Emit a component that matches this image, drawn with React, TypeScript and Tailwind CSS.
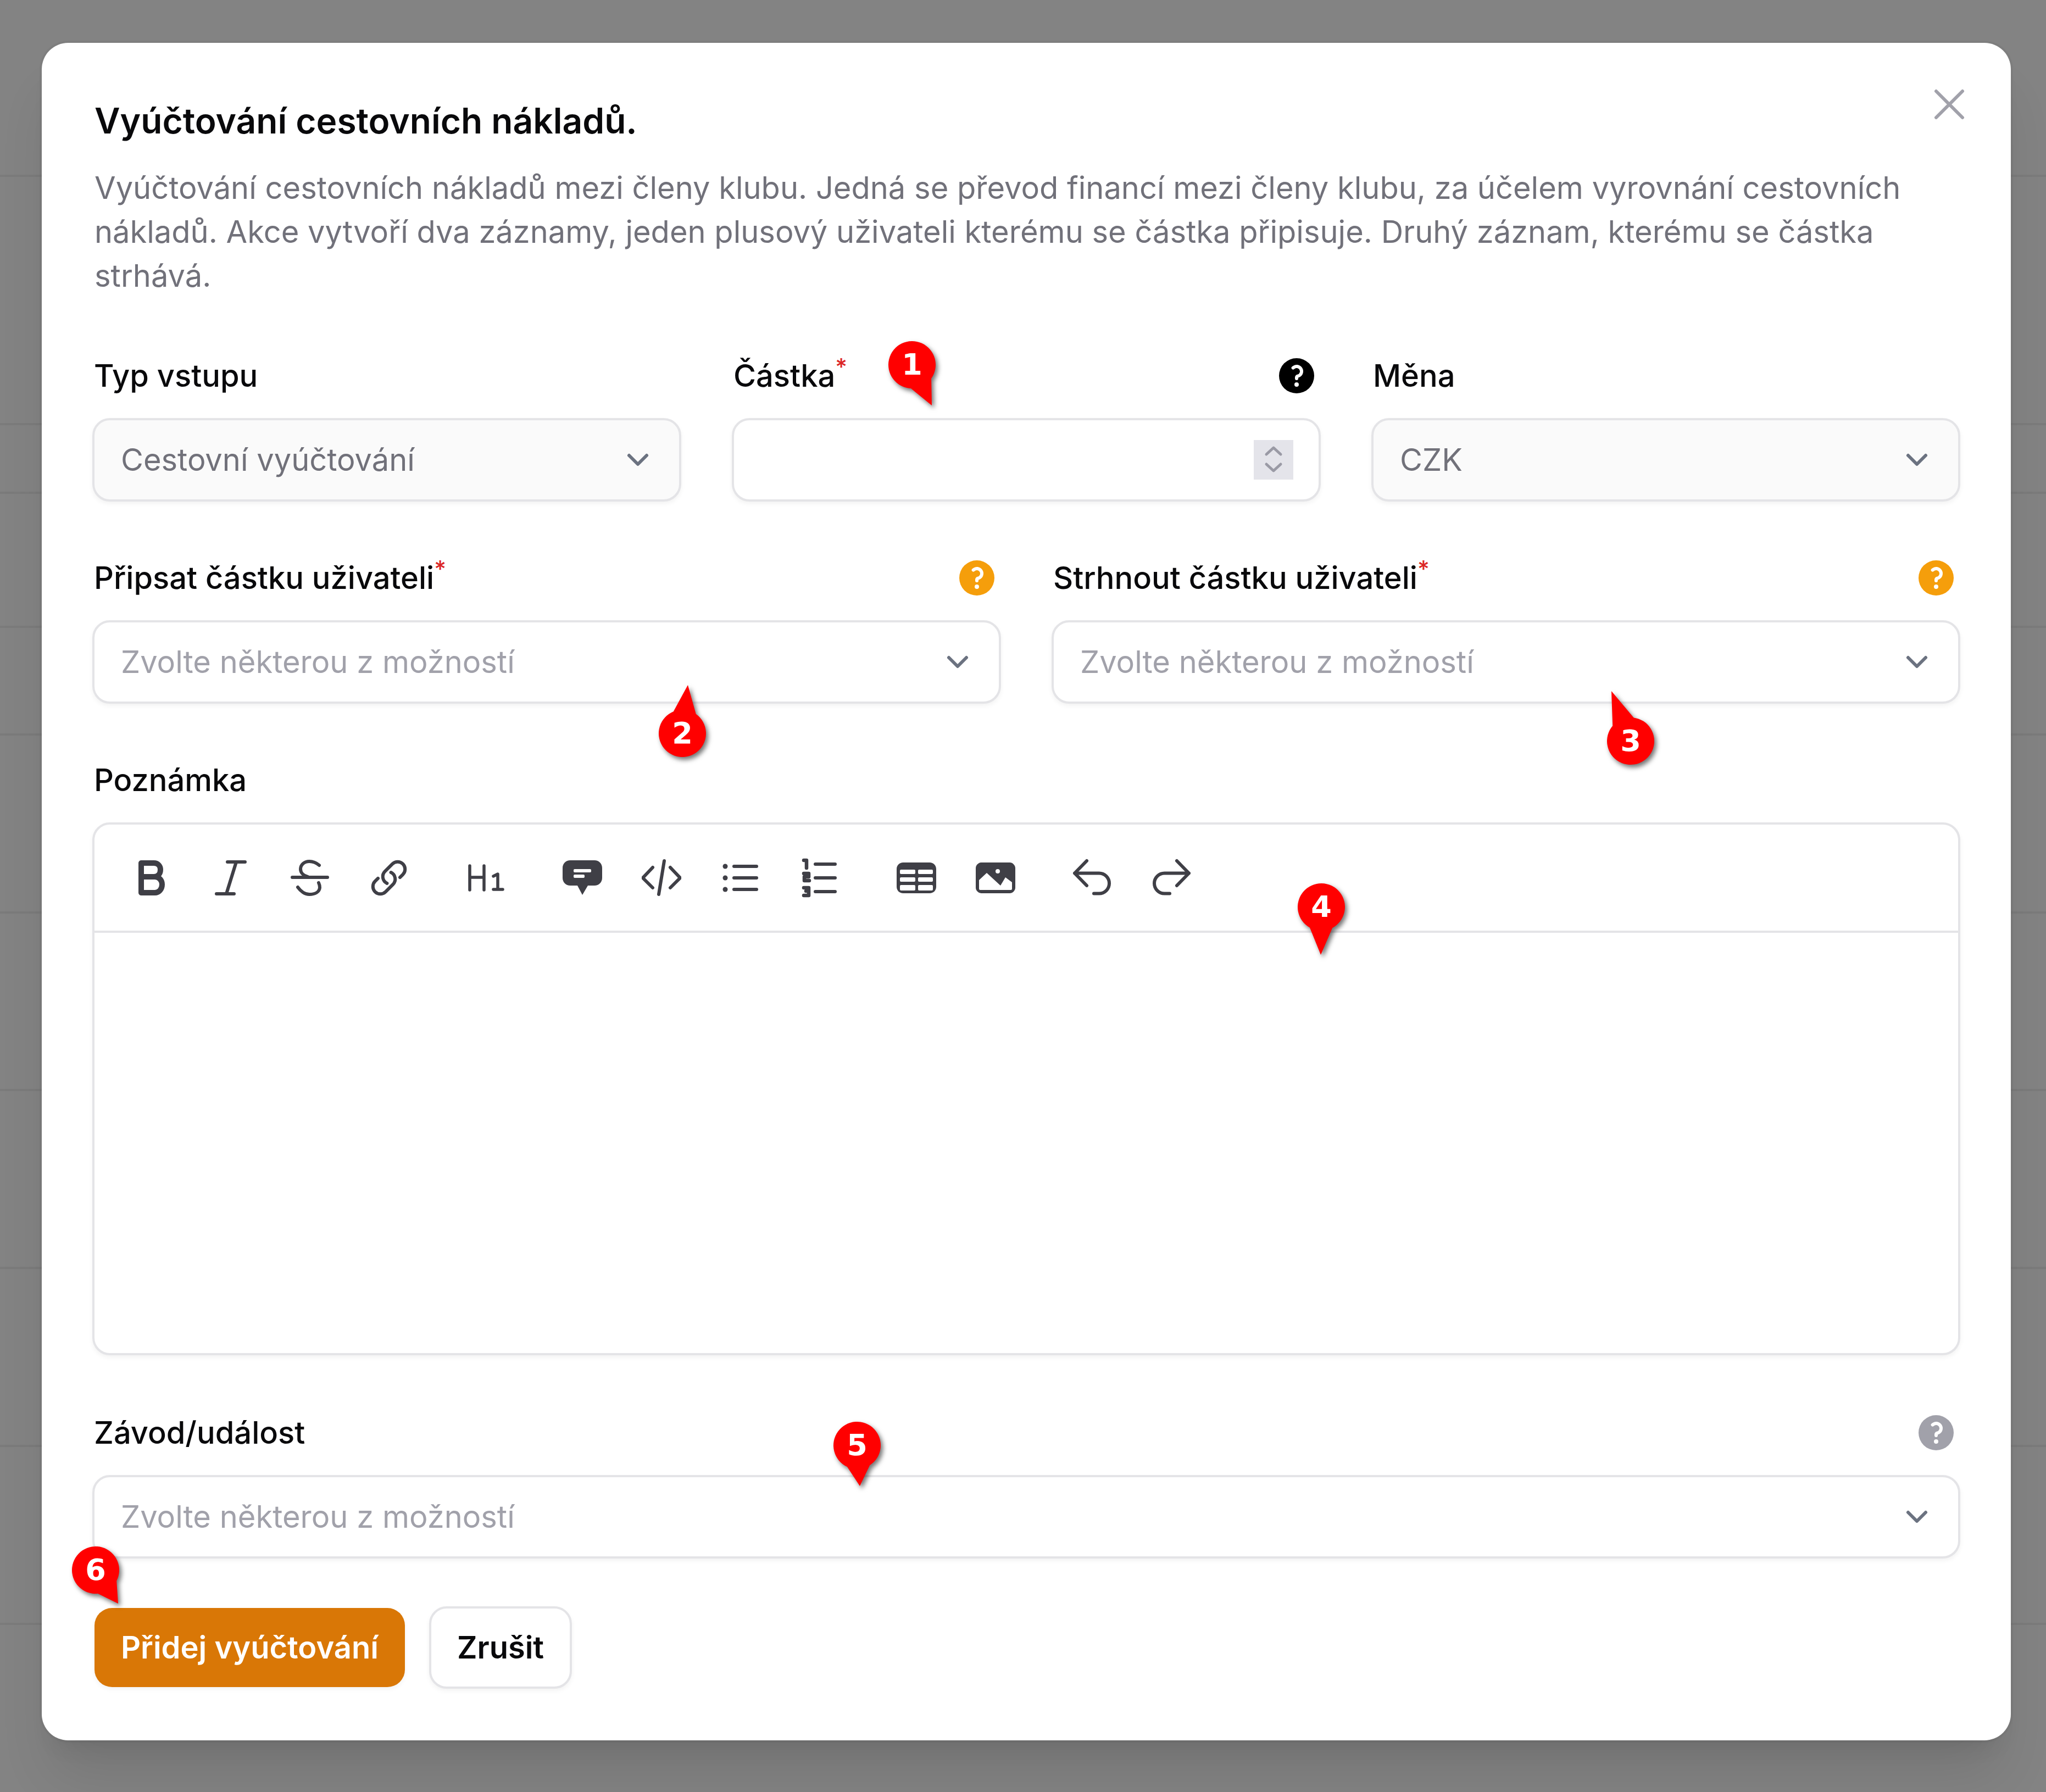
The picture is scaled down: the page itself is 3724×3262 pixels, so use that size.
import React from "react";

const rowClasses = [
  "h-[322px]", "h-[452px]", "h-[125px]", "h-[244px]", "h-[196px]", "h-[324px]", "h-[323px]", "h-[324px]", "h-[324px]", "h-[324px]",
];

const badges = [
  { n: "1", cx: 1660, cy: 664, tx: 1696, ty: 738 },
  { n: "2", cx: 1242, cy: 1335, tx: 1252, ty: 1247 },
  { n: "3", cx: 2968, cy: 1349, tx: 2933, ty: 1258 },
  { n: "4", cx: 2405, cy: 1651, tx: 2404, ty: 1738 },
  { n: "5", cx: 1560, cy: 2631, tx: 1565, ty: 2705 },
  { n: "6", cx: 174, cy: 2858, tx: 215, ty: 2919 },
];

function Badge({ n, cx, cy, tx, ty }: { n: string; cx: number; cy: number; tx: number; ty: number }) {
  const r = 43;
  const a = Math.atan2(ty - cy, tx - cx);
  const spread = 0.5;
  const x1 = r * Math.cos(a - spread);
  const y1 = r * Math.sin(a - spread);
  const x2 = r * Math.cos(a + spread);
  const y2 = r * Math.sin(a + spread);
  const d = `M${x1} ${y1}L${tx - cx} ${ty - cy}L${x2} ${y2}A${r} ${r} 0 1 1 ${x1} ${y1}Z`;
  return (
    <div className="absolute" style={{ left: cx, top: cy }}>
      <svg className="absolute left-0 top-0 h-[1px] w-[1px] overflow-visible drop-shadow-[4px_5px_4px_rgba(0,0,0,0.55)]">
        <path d={d} fill="#ff0000" />
      </svg>
      <span className="absolute left-0 top-0 -translate-x-1/2 -translate-y-1/2 font-['DejaVu_Sans',sans-serif] text-[54px] font-bold leading-none text-white">
        {n}
      </span>
    </div>
  );
}

function Chevron() {
  return (
    <svg viewBox="0 0 20 20" className="h-[80px] w-[80px] shrink-0" fill="none" stroke="#6b7280" strokeWidth="1.5" strokeLinecap="round" strokeLinejoin="round">
      <path d="M6 8l4 4 4-4" />
    </svg>
  );
}

function Help({ color }: { color: string }) {
  return (
    <svg viewBox="0 0 20 20" className={`h-[80px] w-[80px] shrink-0 ${color}`} fill="currentColor">
      <path fillRule="evenodd" clipRule="evenodd" d="M18 10a8 8 0 1 1-16 0 8 8 0 0 1 16 0ZM8.94 6.94a.75.75 0 1 1-1.061-1.061 3 3 0 1 1 2.871 5.026v.345a.75.75 0 0 1-1.5 0v-.5c0-.72.57-1.172 1.081-1.287A1.5 1.5 0 1 0 8.94 6.94ZM10 15a1 1 0 1 0 0-2 1 1 0 0 0 0 2Z" />
    </svg>
  );
}

function Label({ text, required, help }: { text: string; required?: boolean; help?: string }) {
  return (
    <div className="mb-[37px] flex h-[80px] items-center justify-between pl-[3px] pr-[4px]">
      <span className="text-[56px] font-medium leading-[80px] text-[#09090b]">
        {text}
        {required && <sup className="text-[42px] font-medium text-[#dc2626]">*</sup>}
      </span>
      {help && <Help color={help} />}
    </div>
  );
}

function Select({ value, disabled }: { value: string; disabled?: boolean }) {
  return (
    <div className={`flex h-[152px] items-center justify-between rounded-[32px] border-4 border-[#e4e4e7] pl-[48px] pr-[35px] shadow-[0_4px_8px_rgba(0,0,0,0.05)] ${disabled ? "bg-[#fafafa]" : "bg-white"}`}>
      <span className={`text-[56px] leading-[80px] ${disabled ? "text-[#71717a]" : "text-[#a1a1aa]"}`}>{value}</span>
      <Chevron />
    </div>
  );
}

function Icon({ children }: { children: React.ReactNode }) {
  return (
    <div className="flex h-[144px] w-[144px] items-center justify-center">
      <svg viewBox="0 0 72 72" className="h-[72px] w-[72px]" fill="none" stroke="#3f3f46" strokeWidth="6" strokeLinecap="round" strokeLinejoin="round">
        {children}
      </svg>
    </div>
  );
}

const placeholder = "Zvolte některou z možností";

export default function App() {
  return (
    <div className="relative h-[3262px] w-[3724px] overflow-hidden bg-[#838383] font-['Inter',sans-serif]">
      <div className="flex flex-col">
        {rowClasses.map((c, i) => (
          <div key={i} className={`${c} border-b-4 border-[#7b7b7b]`} />
        ))}
      </div>

      <div className="absolute left-[76px] top-[78px] flex h-[3090px] w-[3584px] flex-col rounded-[48px] bg-white pl-[92px] pr-[92px] pt-[94px] shadow-[0_0_0_4px_rgba(0,0,0,0.03),0_80px_100px_-20px_rgba(0,0,0,0.1),0_32px_40px_-24px_rgba(0,0,0,0.1)]">
        <svg viewBox="0 0 24 24" className="absolute right-[64px] top-[64px] h-[96px] w-[96px]" fill="none" stroke="#a1a1aa" strokeWidth="1.5" strokeLinecap="round" strokeLinejoin="round">
          <path d="M6 18 18 6M6 6l12 12" />
        </svg>

        <h2 className="pl-[4px] text-[64px] font-semibold leading-[96px] text-[#09090b]">Vyúčtování cestovních nákladů.</h2>
        <p className="mt-[34px] pl-[4px] text-[56px] leading-[80px] text-[#71717a]">
          Vyúčtování cestovních nákladů mezi členy klubu. Jedná se převod financí mezi členy klubu, za účelem vyrovnání cestovních nákladů. Akce vytvoří dva záznamy, jeden plusový uživateli kterému se částka připisuje. Druhý záznam, kterému se částka strhává.
        </p>

        <div className="mt-[102px] grid grid-cols-3 gap-x-[92px]">
          <div>
            <Label text="Typ vstupu" />
            <Select value="Cestovní vyúčtování" disabled />
          </div>
          <div>
            <Label text="Částka" required help="text-black" />
            <div className="flex h-[152px] items-center justify-end rounded-[32px] border-4 border-[#e4e4e7] bg-white pr-[46px] shadow-[0_4px_8px_rgba(0,0,0,0.05)]">
              <svg viewBox="0 0 72 72" className="h-[72px] w-[72px] bg-[#e4e4ea]" fill="none" stroke="#9a9aa5" strokeWidth="5" strokeLinecap="round" strokeLinejoin="round">
                <path d="M23 26 36 14 49 26M23 44 36 56 49 44" />
              </svg>
            </div>
          </div>
          <div>
            <Label text="Měna" />
            <Select value="CZK" disabled />
          </div>
        </div>

        <div className="mt-[99px] grid grid-cols-2 gap-x-[92px]">
          <div>
            <Label text="Připsat částku uživateli" required help="text-[#f59e0b]" />
            <Select value={placeholder} />
          </div>
          <div>
            <Label text="Strhnout částku uživateli" required help="text-[#f59e0b]" />
            <Select value={placeholder} />
          </div>
        </div>

        <div className="mt-[99px]">
          <Label text="Poznámka" />
          <div className="flex h-[970px] flex-col rounded-[32px] border-4 border-[#e4e4e7] bg-white shadow-[0_4px_8px_rgba(0,0,0,0.05)]">
            <div className="flex h-[197px] shrink-0 items-center gap-[32px] border-b-4 border-[#e4e4e7] pl-[32px]">
              <div className="flex">
                <Icon><path strokeWidth="10" d="M17 9H40C48 9 52 15 52 21C52 29 47 34 40 34H17ZM17 34H42C50 34 55 41 55 48C55 57 49 63 42 63H17Z" /></Icon>
                <Icon><path d="M30 7H62M10 65H42M46 7 28 65" /></Icon>
                <Icon><path d="M4 35H68M53 13C47 8 41 6 35 6C26 6 19 12 19 20C19 27 25 32 32 34M52 45C54 49 54 51 54 54C53 62 45 66 35 66C27 66 19 60 14 53" /></Icon>
                <Icon><path transform="scale(3)" strokeWidth="2" d="M13.19 8.688a4.5 4.5 0 0 1 1.242 7.244l-4.5 4.5a4.5 4.5 0 0 1-6.364-6.364l1.757-1.757m13.35-.622 1.757-1.757a4.5 4.5 0 0 0-6.364-6.364l-4.5 4.5a4.5 4.5 0 0 0 1.242 7.244" /></Icon>
              </div>
              <Icon><path strokeWidth="5.5" d="M7 14V58M33 14V58M7 35H33M50 33 58 29V57M50 57H67" /></Icon>
              <div className="flex">
                <Icon>
                  <path stroke="none" fill="#3f3f46" fillRule="evenodd" d="M14 4H58C66 4 72 10 72 18V36C72 44 66 50 58 50H46L36 67 27 50H14C6 50 0 44 0 36V18C0 10 6 4 14 4ZM22 20H50A2 2 0 0 1 52 22V24A2 2 0 0 1 50 26H22A2 2 0 0 1 20 24V22A2 2 0 0 1 22 20ZM22 30H38A2 2 0 0 1 40 32V34A2 2 0 0 1 38 36H22A2 2 0 0 1 20 34V32A2 2 0 0 1 22 30Z" />
                </Icon>
                <Icon><path d="M20 17 2 36 20 54M52 17 70 36 52 54M41 5 31 66" /></Icon>
                <Icon>
                  <path d="M24 15H65M24 36H65M24 57H65" />
                  <circle cx="8" cy="15" r="4.5" fill="#3f3f46" stroke="none" />
                  <circle cx="8" cy="36" r="4.5" fill="#3f3f46" stroke="none" />
                  <circle cx="8" cy="57" r="4.5" fill="#3f3f46" stroke="none" />
                </Icon>
                <Icon>
                  <path d="M28 11H64M28 36H64M28 61H64" />
                  <path strokeWidth="6.5" d="M7 4H12V18M7 28H16V34H8V41H17M7 54H16V60H11M16 60V68H7" />
                </Icon>
              </div>
              <div className="flex">
                <Icon>
                  <path stroke="none" fill="#3f3f46" fillRule="evenodd" d="M12 8H60C67 8 72 13 72 20V52C72 59 67 64 60 64H12C5 64 0 59 0 52V20C0 13 5 8 12 8ZM8 21H32A2 2 0 0 1 34 23V27A2 2 0 0 1 32 29H8A2 2 0 0 1 6 27V23A2 2 0 0 1 8 21ZM41 21H64A2 2 0 0 1 66 23V27A2 2 0 0 1 64 29H41A2 2 0 0 1 39 27V23A2 2 0 0 1 41 21ZM8 35H32A2 2 0 0 1 34 37V41A2 2 0 0 1 32 43H8A2 2 0 0 1 6 41V37A2 2 0 0 1 8 35ZM41 35H64A2 2 0 0 1 66 37V41A2 2 0 0 1 64 43H41A2 2 0 0 1 39 41V37A2 2 0 0 1 41 35ZM8 49H32A2 2 0 0 1 34 51V57A2 2 0 0 1 32 59H8A2 2 0 0 1 6 57V51A2 2 0 0 1 8 49ZM41 49H64A2 2 0 0 1 66 51V57A2 2 0 0 1 64 59H41A2 2 0 0 1 39 57V51A2 2 0 0 1 41 49Z" />
                </Icon>
                <Icon>
                  <path stroke="none" fill="#3f3f46" fillRule="evenodd" d="M10 8H62C67 8 72 13 72 18V54C72 59 67 64 62 64H10C5 64 0 59 0 54V18C0 13 5 8 10 8ZM6 40 20 27 45 50 54 35 66 44V56A2 2 0 0 1 64 58H8A2 2 0 0 1 6 56ZM40 20A4 4 0 1 0 40 28 4 4 0 1 0 40 20Z" />
                </Icon>
              </div>
              <div className="flex">
                <Icon><path d="M26 5 4 27.5 26 50M4 27.5H48.5A18.5 18.5 0 0 1 48.5 64.5H39" /></Icon>
                <Icon><path d="M46 5 68 27.5 46 50M68 27.5H23.5A18.5 18.5 0 0 0 23.5 64.5H33" /></Icon>
              </div>
            </div>
          </div>
        </div>

        <div className="mt-[101px]">
          <Label text="Závod/událost" help="text-[#a1a1aa]" />
          <Select value={placeholder} />
        </div>

        <div className="mt-[87px] flex items-center gap-[44px] pl-[4px]">
          <div className="flex h-[144px] items-center rounded-[32px] bg-[#d97706] px-[48px] text-[56px] font-semibold leading-[80px] text-white shadow-[0_4px_8px_rgba(0,0,0,0.05)]">
            Přidej vyúčtování
          </div>
          <div className="flex h-[150px] items-center rounded-[32px] border-4 border-[#e4e4e7] bg-white px-[47px] text-[56px] font-semibold leading-[80px] text-[#09090b] shadow-[0_4px_8px_rgba(0,0,0,0.05)]">
            Zrušit
          </div>
        </div>
      </div>

      {badges.map((b) => (
        <Badge key={b.n} {...b} />
      ))}
    </div>
  );
}
